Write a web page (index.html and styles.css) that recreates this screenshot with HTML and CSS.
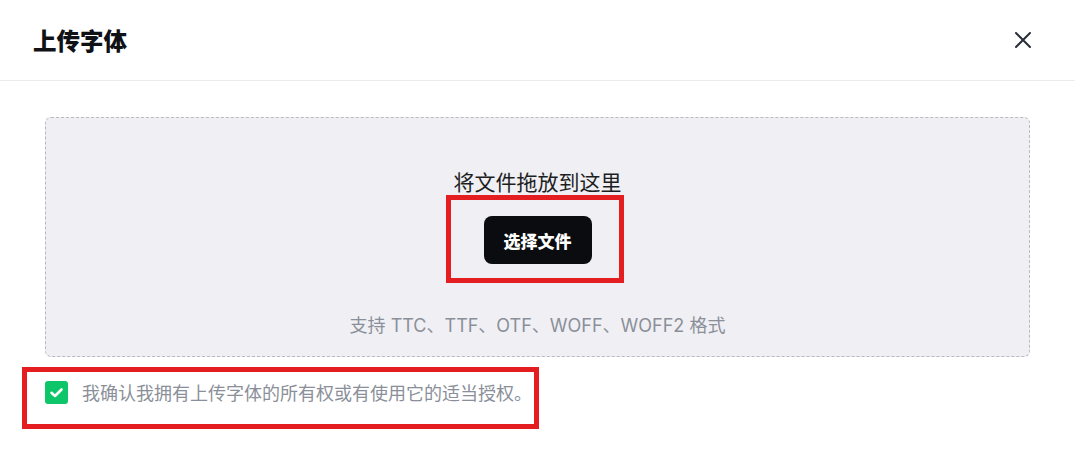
FILE: index.html
```html
<!DOCTYPE html>
<html lang="zh-CN">
    <head>
        <meta charset="utf-8" />
        <meta name="viewport" content="width=device-width, initial-scale=1" />
        <title>上传字体</title>
        <link rel="stylesheet" href="styles.css">
    </head>
    <body>
        <div class="modal">
            <header class="modal-head">
                <h2>上传字体</h2>
                <button class="close" aria-label="关闭">
                    <svg width="20" height="20" viewBox="0 0 20 20"><path d="M3 3 L17 17 M17 3 L3 17" /></svg>
                </button>
            </header>
            <div class="modal-body">
                <div class="dropzone">
                    <p class="drop-title">将文件拖放到这里</p>
                    <div class="pick-wrap">
                        <button class="pick">选择文件</button>
                        <span class="mark mark-pick"></span>
                    </div>
                    <p class="formats">支持 TTC、TTF、OTF、WOFF、WOFF2 格式</p>
                </div>
                <label class="agree">
                    <span class="check">
                        <svg width="23" height="23" viewBox="0 0 23 23"><path d="M6.5 11.8 L10 15 L16.5 8.5" /></svg>
                    </span>
                    <span class="agree-text">我确认我拥有上传字体的所有权或有使用它的适当授权。</span>
                    <span class="mark mark-agree"></span>
                </label>
            </div>
        </div>
    </body>
</html>
```

FILE: styles.css
```css
* { margin: 0; padding: 0; box-sizing: border-box; }
body { font-family: Inter, "Noto Sans CJK SC", sans-serif; background: #fff; color: #16181d; }

.modal { width: 1075px; height: 453px; background: #fff; }

.modal-head {
    height: 81px;
    padding: 0 40px 0 33px;
    display: flex;
    align-items: center;
    justify-content: space-between;
    border-bottom: 1px solid #ebebf0;}
.modal-head h2 { font-size: 23.5px; font-weight: 900; color: #0f1115; }
.close {
    width: 24px; height: 24px;
    border: 0; background: none;
    display: flex; align-items: center; justify-content: center;}
.close svg path { stroke: #2a2e37; stroke-width: 2; stroke-linecap: round; fill: none; }

.modal-body { padding: 36px 45px 0 45px; }

.dropzone {
    height: 240px;
    padding: 51px 0 18px 0;
    display: flex;
    flex-direction: column;
    align-items: center;
    background: #f0eff4;
    border: 1px dashed #b9b9c2;
    border-radius: 6px;}
.drop-title { font-size: 21px; line-height: 28px; color: #1c1e22; }
.pick-wrap { position: relative; margin-top: 19px; }
.pick {
    height: 48px;
    padding: 0 20px;
    border: 0;
    border-radius: 8px;
    background: #0a0c10;
    color: #fff;
    font-family: inherit;
    font-size: 17px;
    font-weight: 900;}
.formats { margin-top: 50px; font-size: 18px; line-height: 24px; color: #8a8f99; }

.agree {
    position: relative;
    margin-top: 20px;
    height: 30px;
    display: flex;
    align-items: center;
    gap: 14px;}
.check {
    width: 23px; height: 23px;
    border-radius: 3px;
    background: #0fc56a;
    display: flex;}
.check svg path { stroke: #fff; stroke-width: 2.6; fill: none; stroke-linecap: round; stroke-linejoin: round; }
.agree-text { font-size: 18px; color: #8a8f99; }

.mark { position: absolute; border: 5px solid #e41d20; pointer-events: none; }
.mark-pick { left: -38px; top: -21px; width: 178px; height: 88px; }
.mark-agree { left: -23px; top: -10px; width: 517px; height: 62px; }
```
